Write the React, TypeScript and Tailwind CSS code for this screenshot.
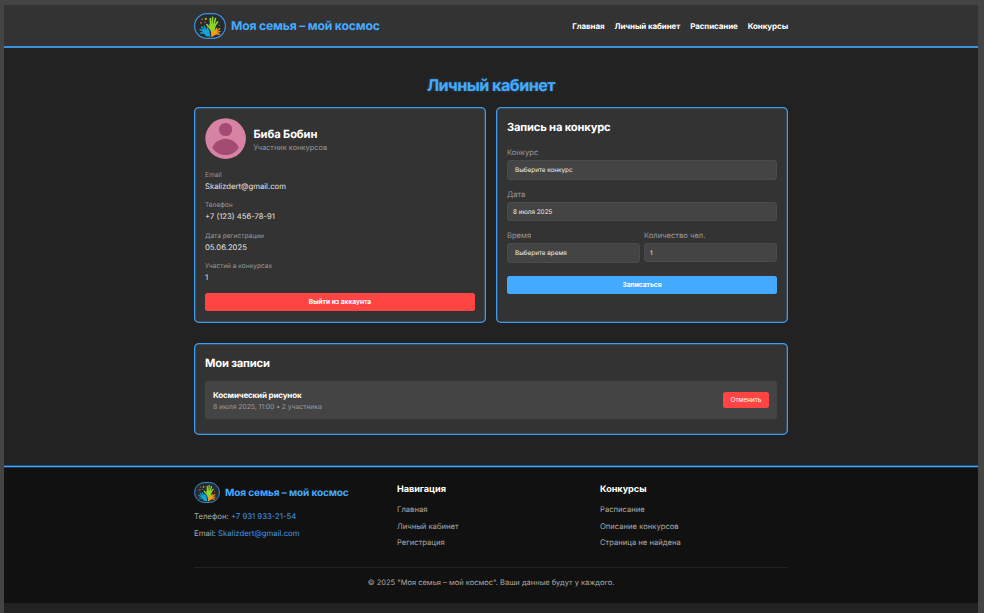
import type { ReactNode } from "react";

function Logo({ className }: { className: string }) {
  return (
    <svg viewBox="0 0 32 26" className={`shrink-0 ${className}`}>
      <rect x="0.6" y="0.6" width="30.8" height="24.8" rx="12.4" fill="#252b30" stroke="#3d93dc" strokeWidth="1.2" />
      <g stroke="#12a5dc" fill="#12a5dc" strokeLinecap="round" strokeWidth="1.4">
        <path d="M9.5 17.5 L14.5 17 L15.5 23 L12.5 22.5 Z" />
        <path d="M11 19 L6 16.6 M11 18.5 L7.6 14 M12 18 L10.3 13.500 M13 18 L13.4 15 M11 20.5 L6.8 19.8" />
      </g>
      <g stroke="#f89a1c" fill="#f89a1c" strokeLinecap="round" strokeWidth="1.4">
        <path d="M17.5 18 L22 18 L22 20.5 L18 23 Z" />
        <path d="M21 19 L22.6 15.500 M21 19 L25.6 15.7 M21 19.5 L26 18.6 M21 20.5 L25.2 21.2" />
      </g>
      <g stroke="#8fd62c" fill="#8fd62c" strokeLinecap="round" strokeWidth="1.6">
        <path d="M16 12 L21 12 L20 17 L17.5 18 Z" />
        <path d="M16.6 13 L16.300 5.5 M18 13 L18.7 4.3 M19.5 13 L21.5 5.5 M20.3 13.5 L23.5 9 M16.5 16 L12.8 11.500" />
      </g>
      <circle cx="7" cy="9.8" r="1.1" fill="#e5401f" />
      <circle cx="11.8" cy="5.9" r="1.1" fill="#f89a1c" />
      <circle cx="8.2" cy="6.4" r="0.8" fill="#5c9a30" />
      <circle cx="11" cy="9.3" r="0.7" fill="#e5701f" />
      <circle cx="25.3" cy="12.2" r="0.7" fill="#d8401f" />
    </svg>
  );
}

function Card({ className, children }: { className: string; children: ReactNode }) {
  return (
    <section className={`rounded-[5px] bg-[#333] px-[11px] shadow-[inset_0_0_0_1.3px_#3f9df0] ${className}`}>
      {children}
    </section>
  );
}

const fields = [
  ["Email", "Skalizdert@gmail.com"],
  ["Телефон", "+7 (123) 456-78-91"],
  ["Дата регистрации", "05.06.2025"],
  ["Участий в конкурсах", "1"],
];

function FooterColumn({ title, links }: { title: string; links: string[] }) {
  return (
    <div className="w-[203px] shrink-0 pt-[19px]">
      <h3 className="text-[9.1px] leading-[12px] font-bold tracking-[-0.03px] text-white">{title}</h3>
      <ul className="pt-[6.4px]">
        {links.map((l) => (
          <li key={l} className="h-[16.25px] text-[7.65px] leading-[16px] text-[#aaa]">{l}</li>
        ))}
      </ul>
    </div>
  );
}

const cardTitle = "text-[11.2px] leading-[14px] font-bold tracking-[-0.18px] text-white";
const inputLabel = "block pt-px text-[7.6px] leading-[12px] text-[#999]";
const inputBox = "flex items-center rounded-[3px] border border-[#4b4b4b] bg-[#444] pt-[2px] text-[6.35px] text-[#eee]";

export default function App() {
  return (
    <div className="h-[613px] w-[984px] overflow-hidden bg-[#444] pt-[5px] pr-[6px] pl-[4px] font-['Inter',sans-serif] [text-rendering:geometricPrecision]">
      <div className="flex h-[608px] flex-col bg-[#222]">
        <header className="h-[43px] border-b-2 border-[#3b93de] bg-[#333]">
          <div className="mx-auto flex h-[41px] w-[594px] items-center justify-between">
            <div className="flex items-center gap-[5px]">
              <Logo className="h-[26px] w-[32px]" />
              <span className="text-[12.2px] leading-[16px] font-bold tracking-[-0.2px] text-[#4af]">Моя семья – мой космос</span>
            </div>
            <nav className="flex gap-[10px] text-[8px] leading-[12px] font-bold tracking-[-0.1px] text-white">
              <a>Главная</a>
              <a>Личный кабинет</a>
              <a>Расписание</a>
              <a>Конкурсы</a>
            </nav>
          </div>
        </header>

        <main className="mx-auto h-[417px] w-[594px] pt-[27px]">
          <h1 className="text-center text-[16.2px] leading-[20px] font-bold tracking-[-0.55px] text-[#4af] [text-shadow:0_0_3px_rgba(68,170,255,0.35)]">
            Личный кабинет
          </h1>
          <div className="flex gap-[10px] pt-[12px]">
            <Card className="h-[216px] w-[292px] pt-[11px]">
              <div className="flex items-center gap-[7.5px]">
                <svg viewBox="0 0 41 41" className="h-[41px] w-[41px]">
                  <circle cx="20.6" cy="20.6" r="20.3" fill="#d783a3" />
                  <circle cx="20.6" cy="11.5" r="6.6" fill="#a44b73" />
                  <path d="M7.3 29.7 C9.5 24.2 14.5 20.7 20.6 20.7 C26.5 20.7 31.5 24.2 33.8 29.700 C31 34.2 26 37 20.600 37 C15 37 10 34.2 7.3 29.7 Z" fill="#a44b73" />
                </svg>
                <div className="pt-[3px]">
                  <h2 className="text-[11.2px] leading-[14px] font-bold tracking-[-0.13px] text-white">Биба Бобин</h2>
                  <p className="text-[7.45px] leading-[13px] text-[#999]">Участник конкурсов</p>
                </div>
              </div>
              <dl className="pt-[10px]">
                {fields.map(([label, value]) => (
                  <div key={label} className="h-[30.3px]">
                    <dt className="text-[6.6px] leading-[12px] text-[#999]">{label}</dt>
                    <dd className="text-[7.7px] leading-[12px] text-[#e4e4e4]">{value}</dd>
                  </div>
                ))}
              </dl>
              <button className="mt-[3px] block h-[18px] w-full rounded-[2.5px] bg-[#f44] text-[6.6px] leading-[18px] font-bold text-white">
                Выйти из аккаунта
              </button>
            </Card>

            <Card className="h-[216px] w-[292px] pt-[13px]">
              <h2 className={cardTitle}>Запись на конкурс</h2>
              <label className={`${inputLabel} mt-[12px]`}>Конкурс</label>
              <div className={`${inputBox} mt-px h-[20px] px-[7px]`}>Выберите конкурс</div>
              <label className={`${inputLabel} mt-[8px]`}>Дата</label>
              <div className={`${inputBox} mt-px h-[19px] px-[5px]`}>8 июля 2025</div>
              <div className="mt-[8px] flex gap-[4px]">
                <div className="w-[133px]">
                  <label className={inputLabel}>Время</label>
                  <div className={`${inputBox} mt-px h-[20px] px-[7px]`}>Выберите время</div>
                </div>
                <div className="w-[133px]">
                  <label className={inputLabel}>Количество чел.</label>
                  <div className={`${inputBox} mt-px h-[19px] px-[5px]`}>1</div>
                </div>
              </div>
              <button className="mt-[13px] block h-[18px] w-full rounded-[2.5px] bg-[#4af] text-[6.6px] leading-[18px] font-bold text-white">
                Записаться
              </button>
            </Card>
          </div>

          <Card className="mt-[20px] h-[92px] pt-[13px]">
            <h2 className={cardTitle}>Мои записи</h2>
            <div className="mt-[11px] flex h-[38px] items-center justify-between rounded-[2.5px] bg-[#444] px-[8px]">
              <div className="pt-[2px]">
                <h3 className="text-[8px] leading-[11px] font-bold tracking-[-0.15px] text-white">Космический рисунок</h3>
                <p className="text-[6.9px] leading-[12px] tracking-[-0.08px] text-[#999]">8 июля 2025, 11:00 • 2 участника</p>
              </div>
              <button className="h-[16px] w-[46px] rounded-[2.5px] bg-[#f44] pt-px text-[6.4px] leading-[15px] text-white">Отменить</button>
            </div>
          </Card>
        </main>

        <footer className="h-[138px] bg-[#111] shadow-[inset_0_1px_0_#205080,inset_0_2px_0_#45a6f8,inset_0_3px_0_#1c3f5e]">
          <div className="mx-auto w-[594px]">
            <div className="flex h-[102px]">
              <div className="w-[203px] shrink-0 pt-[17px] text-[7.75px] text-[#aaa]">
                <div className="flex items-center gap-[5px]">
                  <Logo className="h-[21px] w-[26px]" />
                  <span className="text-[10.1px] leading-[14px] font-bold tracking-[-0.14px] text-[#4af]">Моя семья – мой космос</span>
                </div>
                <p className="mt-[5px] leading-[17px]">Телефон: <a className="text-[#4498e4]">+7 931 933-21-54</a></p>
                <p className="leading-[17px]">Email: <a className="text-[#4498e4]">Skalizdert@gmail.com</a></p>
              </div>
              <FooterColumn title="Навигация" links={["Главная", "Личный кабинет", "Регистрация"]} />
              <FooterColumn title="Конкурсы" links={["Расписание", "Описание конкурсов", "Страница не найдена"]} />
            </div>
            <p className="border-t border-[#222] pt-[9px] text-center text-[7.5px] leading-[12px] text-[#aaa]">
              © 2025 "Моя семья – мой космос". Ваши данные будут у каждого.
            </p>
          </div>
        </footer>
      </div>
    </div>
  );
}
